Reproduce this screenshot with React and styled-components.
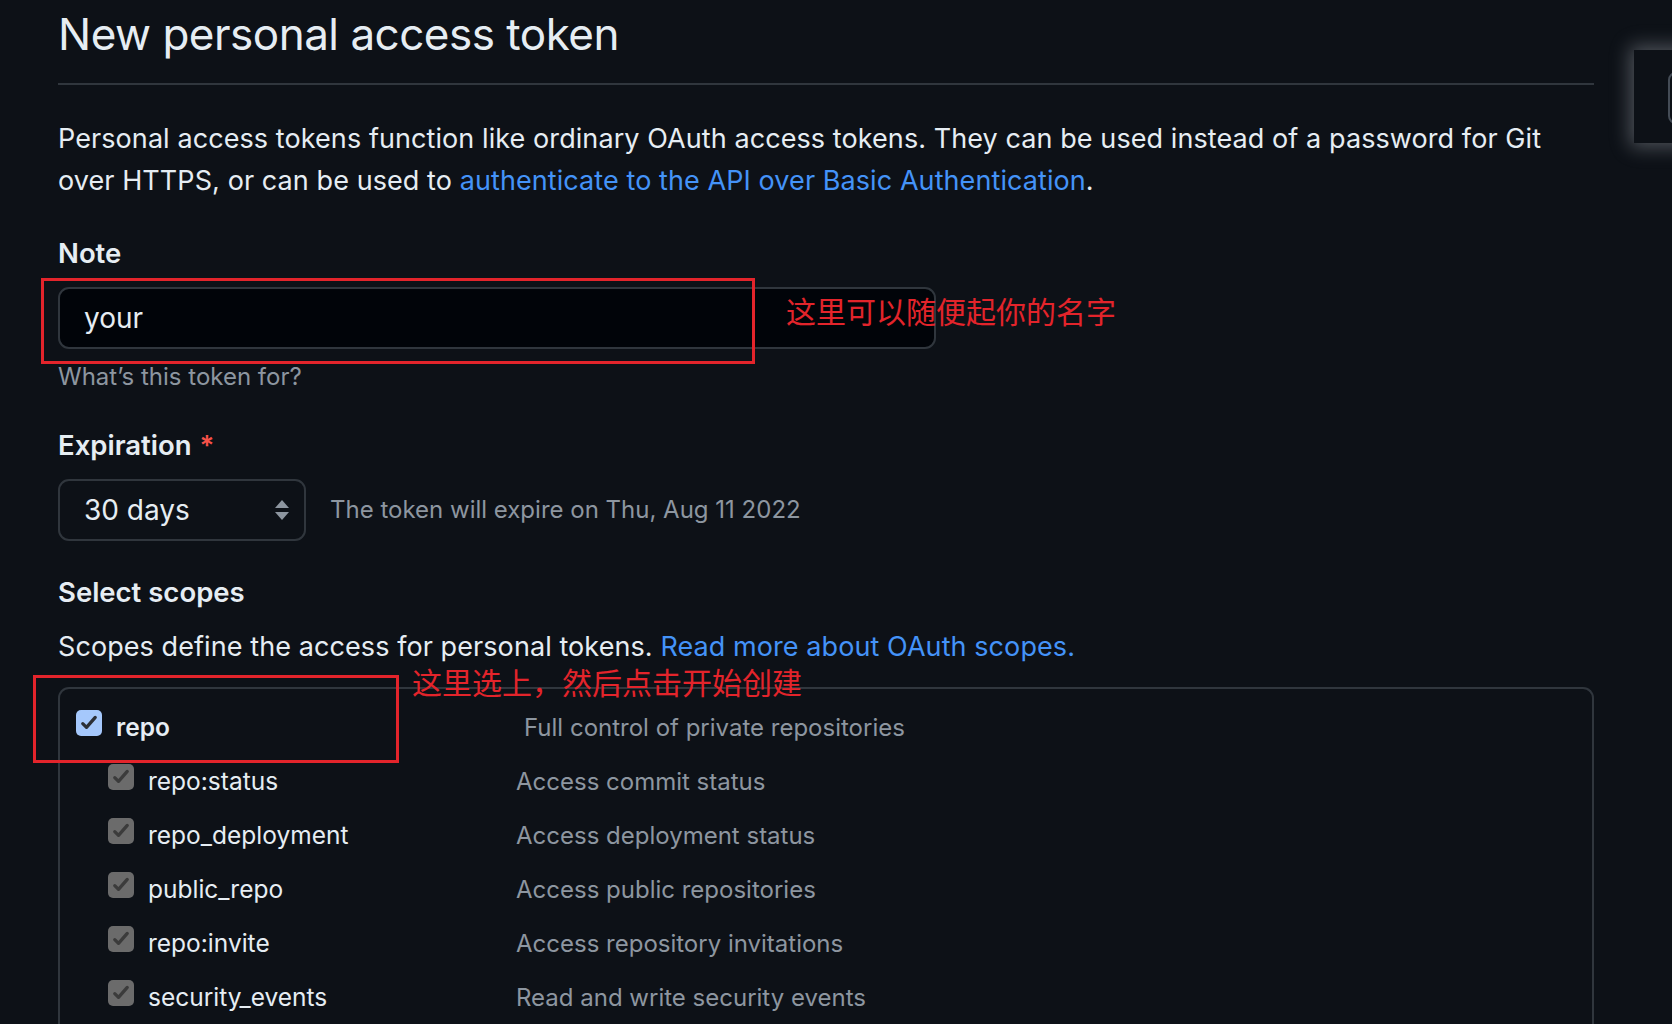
import React from 'react'
import styled, { createGlobalStyle } from 'styled-components'

const Global = createGlobalStyle`
  html, body {
    margin: 0;
    background: #0d1117;
  }
  body {
    font-family: "Inter", "Noto Sans CJK SC", sans-serif;
    color: #e6edf3;
    overflow: hidden;
  }
`

const Page = styled.div`
  position: relative;
  width: 1672px;
  height: 1024px;
  overflow: hidden;
  padding-left: 58px;
  box-sizing: border-box;
`

const Main = styled.div`
  width: 1536px;
`

const Subhead = styled.h2`
  margin: 0 0 33px;
  padding-bottom: 15px;
  border-bottom: 2px solid #30363d;
  font-size: 44px;
  font-weight: 400;
  line-height: 68px;
  letter-spacing: -0.5px;
  color: #e6edf3;
`

const Lead = styled.p`
  margin: 0 0 30px;
  font-size: 27px;
  line-height: 42px;
  letter-spacing: 0.08px;
  color: #e6edf3;

  a {
    color: #4493f8;
    text-decoration: none;
  }
`

const Field = styled.div`
  margin-bottom: ${p => p.$gap || 30}px;
`

const Label = styled.div`
  font-size: 27.5px;
  font-weight: 600;
  line-height: 42px;
  margin-bottom: 13px;
  color: #e6edf3;

  span {
    color: #f85149;
    margin-left: 8px;
  }
`

const Anchor = styled.div`
  position: relative;
`

const Input = styled.div`
  width: 878px;
  height: 62px;
  box-sizing: border-box;
  border: 2px solid #30363d;
  border-radius: 11px;
  background: #010409;
  display: flex;
  align-items: center;
  padding: 0 24px;
  font-size: 28px;
  color: #e6edf3;
`

const Hint = styled.div`
  margin-top: 10px;
  font-size: 24px;
  line-height: 35px;
  color: #8d96a0;
`

const RedBox = styled.div`
  position: absolute;
  left: ${p => p.$left}px;
  top: ${p => p.$top}px;
  width: ${p => p.$w}px;
  height: ${p => p.$h}px;
  border: 3px solid #e3242b;
  box-sizing: border-box;
  pointer-events: none;
`

const RedNote = styled.div`
  position: absolute;
  left: ${p => p.$left}px;
  top: ${p => p.$top}px;
  font-family: "Noto Sans CJK SC", sans-serif;
  font-size: 30px;
  line-height: 34px;
  color: #e3242b;
  white-space: nowrap;
`

const SelectRow = styled.div`
  display: flex;
  align-items: center;
  gap: 24px;
`

const Select = styled.div`
  width: 248px;
  height: 62px;
  box-sizing: border-box;
  border: 2px solid #30363d;
  border-radius: 11px;
  background: #0d1117;
  display: flex;
  align-items: center;
  justify-content: space-between;
  padding: 0 14px 0 24px;
  font-size: 28px;
  color: #e6edf3;
`

const Muted = styled.div`
  font-size: 24px;
  color: #8d96a0;
  margin-top: -2px;
`

const ScopeIntro = styled.p`
  margin: 0 0 19px;
  font-size: 27px;
  line-height: 42px;
  letter-spacing: 0.08px;
  color: #e6edf3;

  a {
    color: #4493f8;
    text-decoration: none;
  }
`

const ScopeBox = styled.div`
  border: 2px solid #30363d;
  border-bottom: none;
  border-radius: 11px 11px 0 0;
  height: 400px;
  box-sizing: border-box;
  padding: 18px 0 0 16px;
`

const Row = styled.div`
  display: grid;
  grid-template-columns: ${p => (p.$sub ? '408px 1fr' : '448px 1fr')};
  align-items: center;
  height: ${p => (p.$sub ? 54 : 40)}px;
  padding-left: ${p => (p.$sub ? 32 : 0)}px;
  margin-bottom: ${p => (p.$sub ? 0 : 7)}px;
`

const Name = styled.div`
  display: flex;
  align-items: center;
  gap: 14px;
  font-size: 24.5px;
  font-weight: ${p => (p.$bold ? 600 : 400)};
  color: #e6edf3;
`

const Box = styled.span`
  width: 26px;
  height: 26px;
  border-radius: 5px;
  background: ${p => (p.$on ? '#a5c8fc' : '#6b6b6b')};
  display: inline-flex;
  align-items: center;
  justify-content: center;
  margin-top: -8px;
  flex-shrink: 0;
`

const Desc = styled.div`
  font-size: 24px;
  color: #8d96a0;
`

const Floating = styled.div`
  position: absolute;
  left: 1634px;
  top: 50px;
  width: 60px;
  height: 93px;
  background: #0d1117;
  box-shadow: 0 0 18px 4px rgba(200, 205, 215, 0.35);
`

const FloatingKnob = styled.div`
  position: absolute;
  left: 34px;
  top: 22px;
  width: 30px;
  height: 48px;
  border: 2px solid #444c56;
  border-radius: 8px;
`

const Check = ({ on }) => (
  <Box $on={on}>
    <svg width="20" height="20" viewBox="0 0 16 16">
      <path d="M3 8.5l3 3 7-8" fill="none" stroke={on ? '#2b2f36' : '#3b3b3b'} strokeWidth="2.6" strokeLinecap="round" strokeLinejoin="round" />
    </svg>
  </Box>
)

const Arrows = () => (
  <svg width="16" height="22" viewBox="0 0 16 22">
    <path d="M8 1l7 8H1z" fill="#8d96a0" />
    <path d="M8 21l7-8H1z" fill="#8d96a0" />
  </svg>
)

const subScopes = [
  ['repo:status', 'Access commit status'],
  ['repo_deployment', 'Access deployment status'],
  ['public_repo', 'Access public repositories'],
  ['repo:invite', 'Access repository invitations'],
  ['security_events', 'Read and write security events'],
]

export default function App() {
  return (
    <Page>
      <Global />
      <Main>
        <Subhead>New personal access token</Subhead>
        <Lead>
          Personal access tokens function like ordinary OAuth access tokens. They can be used instead of a password for Git
          over HTTPS, or can be used to <a href="#">authenticate to the API over Basic Authentication</a>.
        </Lead>

        <Field>
          <Label>Note</Label>
          <Anchor>
            <Input>your</Input>
            <RedBox $left={-17} $top={-9} $w={714} $h={86} />
            <RedNote $left={728} $top={6}>这里可以随便起你的名字</RedNote>
          </Anchor>
          <Hint>What’s this token for?</Hint>
        </Field>

        <Field>
          <Label>Expiration<span>*</span></Label>
          <SelectRow>
            <Select>
              30 days
              <Arrows />
            </Select>
            <Muted>The token will expire on Thu, Aug 11 2022</Muted>
          </SelectRow>
        </Field>

        <Label>Select scopes</Label>
        <ScopeIntro>
          Scopes define the access for personal tokens. <a href="#">Read more about OAuth scopes.</a>
        </ScopeIntro>

        <Anchor>
          <ScopeBox>
            <Row>
              <Name $bold>
                <Check on />
                repo
              </Name>
              <Desc>Full control of private repositories</Desc>
            </Row>
            {subScopes.map(([name, desc]) => (
              <Row $sub key={name}>
                <Name>
                  <Check />
                  {name}
                </Name>
                <Desc>{desc}</Desc>
              </Row>
            ))}
          </ScopeBox>
          <RedBox $left={-25} $top={-12} $w={366} $h={88} />
          <RedNote $left={354} $top={-23}>这里选上，然后点击开始创建</RedNote>
        </Anchor>
      </Main>
      <Floating>
        <FloatingKnob />
      </Floating>
    </Page>
  )
}
